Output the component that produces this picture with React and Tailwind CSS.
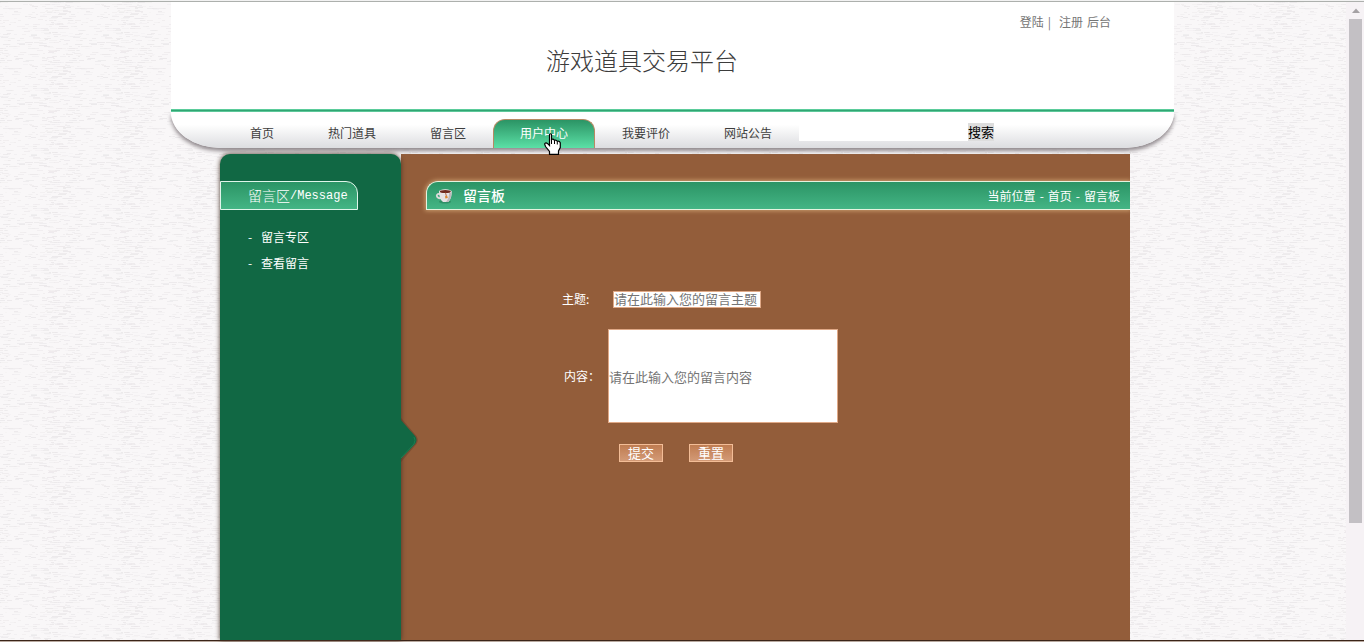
const tabs = ['首页', '热门道具', '留言区', '用户中心', '我要评价', '网站公告']

function PaperTexture() {
  const dashes = []
  let seed = 7
  const next = () => {
    seed = (seed * 16807) % 2147483647
    return seed / 2147483647
  }
  for (let y = 0; y < 60; y += 2) {
    for (let n = 0; n < 9; n++) {
      const x = Math.floor(next() * 72)
      const w = 2 + Math.floor(next() * 7)
      const shift = next() > 0.85 ? 1 : 0
      const opacity = 0.2 + next() * 0.7
      dashes.push({ x, y: y + shift, w, opacity })
    }
  }
  return (
    <svg className="absolute inset-0 h-full w-full" aria-hidden="true">
      <defs>
        <pattern id="paper" width="72" height="60" patternUnits="userSpaceOnUse">
          <rect width="72" height="60" fill="#f9f7f8" />
          {dashes.map((d, i) => (
            <g key={i} fill="#ebe8ea" fillOpacity={d.opacity}>
              <rect x={d.x} y={d.y} width={d.w} height="1" />
              <rect x={d.x - 72} y={d.y} width={d.w} height="1" />
            </g>
          ))}
        </pattern>
      </defs>
      <rect width="100%" height="100%" fill="url(#paper)" />
    </svg>
  )
}

function Cup() {
  return (
    <svg className="h-4 w-[18px] shrink-0" viewBox="0 0 18 16" aria-hidden="true">
      <ellipse cx="10" cy="13.8" rx="6" ry="1.8" fill="#277c57" opacity="0.6" />
      <path d="M5 6C2 5.4 1.2 7.4 2.2 8.9C3.2 10.2 5 10.4 6.5 10" fill="none" stroke="#dedadb" strokeWidth="1.8" />
      <path d="M4 3.5H16.6C17 7.5 15.7 12 13 14H8C5.3 12 4 8 4 3.5Z" fill="#e6e2e4" />
      <path d="M14 5H16.5C16.3 9 15.3 12.4 13 14H11C13.4 11 14.3 8 14 5Z" fill="#bfb9bd" />
      <ellipse cx="10.3" cy="3.4" rx="6.4" ry="2.1" fill="#f3eeee" />
      <ellipse cx="10.3" cy="3.5" rx="5.5" ry="1.5" fill="#6f2a20" />
      <path d="M10.5 4.5L11.3 8" stroke="#a5461f" strokeWidth="0.8" />
      <path d="M10 8.2L12.2 7.8L12.8 10L10.4 10.6Z" fill="#e0862c" />
    </svg>
  )
}

function HandPointer() {
  return (
    <svg className="pointer-events-none absolute left-[50px] top-[13px] h-[22px] w-[17px]" viewBox="0 0 17 22" aria-hidden="true">
      <path
        d="M5.5 1.5Q6.5 0 7.5 1.5V6.5Q9.2 5.4 10.5 7.3Q12.2 6.5 13.3 8.3Q15.3 7.6 16.3 9.8V14.5L14.5 18V21.3H5.5V18.5L1.5 13.5L.6 11Q1.6 9 3.7 10.7L5.5 12.5Z"
        fill="#fff"
        stroke="#000"
        strokeWidth="1.2"
      />
      <path d="M7.5 6V11M10.5 7.3V11M13.3 8.3V11.5" stroke="#000" fill="none" />
    </svg>
  )
}

function Header() {
  return (
    <header>
      <div className="flex h-[107px] flex-col bg-white">
        <div className="flex justify-end pr-[63px] pt-3 text-[12px] leading-4 text-[#757575]">
          <a href="#login">登陆</a>
          <span className="ml-1">|</span>
          <a href="#register" className="ml-2">注册</a>
          <a href="#admin" className="ml-1">后台</a>
        </div>
        <h1 className="pl-[375px] pt-[14px] text-[24px] font-light leading-8 text-[#3c3c3c]">游戏道具交易平台</h1>
      </div>
      <div className="h-[3px] bg-linear-to-b from-[#6fe0b0] via-[#2fa673] to-[#6fe0b0]" />
      <nav className="relative flex h-[36px] items-end rounded-b-[50px_36px] bg-linear-to-b from-white from-35% to-[#dcdde0] pl-[52px] text-[12px] text-[#3d3d3d] shadow-[0_3px_4px_#8e878b]">
        {tabs.map((tab) =>
          tab === '用户中心' ? (
            <a key={tab} href="#tab" className="relative flex h-[29px] items-center rounded-t-xl border border-b-0 border-[#b68a64] bg-linear-to-b from-[#2b9465] to-[#5be0a6] px-[26px] pb-[2px] text-white">
              {tab}
              <HandPointer />
            </a>
          ) : (
            <a key={tab} href="#tab" className="flex h-[29px] items-center px-[27px] pb-[2px]">{tab}</a>
          ),
        )}
        <form className="mb-[7px] flex items-end">
          <input aria-label="搜索" className="h-[18px] w-[169px] bg-white px-1 outline-none" />
          <button type="button" className="h-[18px] bg-[#dddddd] text-[13px] leading-[18px] text-black">搜索</button>
        </form>
      </nav>
    </header>
  )
}

function Sidebar() {
  return (
    <aside className="relative z-10 w-[181px] shrink-0 rounded-t-[10px] bg-[#116844] pt-[27px] shadow-[0_0_5px_#4a3528]">
      <h2 className="flex h-[29px] w-[138px] items-center rounded-tr-xl border border-[#e0f5ea] bg-linear-to-b from-[#2b9465] to-[#44b585] pl-[27px] text-[14px] font-light text-white">
        留言区<span className="font-['Liberation_Mono',monospace] text-[12px]">/Message</span>
      </h2>
      <ul className="pl-7 pt-[14px] text-[12px] leading-[26px] text-white">
        {['留言专区', '查看留言'].map((item) => (
          <li key={item} className="flex gap-2">
            <span className="w-[5px]">-</span>
            <a href="#message">{item}</a>
          </li>
        ))}
      </ul>
      <svg className="absolute left-[180px] top-[262px] h-[48px] w-[22px]" viewBox="0 0 22 48" aria-hidden="true">
        <path d="M1 2L16.5 20Q19 24 16.5 28L1 46Z" fill="#4d3525" opacity="0.35" />
        <path d="M0 3L15 20Q18 24 15 28L0 44Z" fill="#116844" />
        <path d="M1 42L14 28Q16 24 14 21" fill="none" stroke="#1d7d50" />
      </svg>
    </aside>
  )
}

function MessageForm() {
  return (
    <form className="pl-[161px] pt-[80px] text-[12px] text-white">
      <div className="flex items-center">
        <label htmlFor="subject" className="w-[51px]">主题:</label>
        <input id="subject" placeholder="请在此输入您的留言主题" className="h-[17px] w-[148px] border border-[#e0a987] bg-white text-[13px] text-[#333333] outline-none placeholder:text-[#757575]" />
      </div>
      <div className="mt-[21px] flex items-center">
        <label htmlFor="content" className="w-[46px] pl-[2px]">内容：</label>
        <input id="content" placeholder="请在此输入您的留言内容" className="h-[94px] w-[230px] border border-[#e0a987] bg-white text-[13px] text-[#333333] outline-none placeholder:text-[#757575]" />
      </div>
      <div className="mt-[21px] flex gap-[26px] pl-[57px] text-[13px] leading-4">
        <button type="button" className="h-[18px] w-11 border border-[#f3bd97] bg-linear-to-b from-[#bf7c51] to-[#d39a76]">提交</button>
        <button type="reset" className="h-[18px] w-11 border border-[#f3bd97] bg-linear-to-b from-[#bf7c51] to-[#d39a76]">重置</button>
      </div>
    </form>
  )
}

function ScrollTrack() {
  return (
    <div className="flex w-[18px] shrink-0 flex-col items-center bg-[#f6f2f5]" aria-hidden="true">
      <svg className="h-[17px] w-[16px]" viewBox="0 0 16 17">
        <path d="M5 11L9 6.5L13 11Z" fill="#a5a1a4" />
      </svg>
      <div className="ml-px h-[504px] w-[13px] bg-[#c3c0c4]" />
    </div>
  )
}

export default function App() {
  return (
    <div className="flex h-screen flex-col overflow-hidden border-t border-[#f2f2f2] font-['Noto_Sans_CJK_SC',sans-serif]">
      <div className="flex min-h-0 flex-1 border-t border-[#adb0ad]">
        <div className="relative flex min-w-0 flex-1 justify-center pr-px">
          <PaperTexture />
          <div className="relative flex h-full w-full max-w-[1003px] flex-col">
            <Header />
            <div className="ml-[49px] mr-11 mt-[6px] flex min-h-0 flex-1">
              <Sidebar />
              <main className="min-w-0 flex-1 overflow-hidden bg-[#935d3a] pt-[27px]">
                <div className="ml-[25px] flex h-[29px] items-center rounded-tl-xl border border-r-0 border-[#e5f3df] bg-linear-to-b from-[#2b9465] to-[#44b585] pl-2 pr-[10px] text-white shadow-[0_0_4px_1px_#c99b6c]">
                  <Cup />
                  <h2 className="ml-[10px] text-[14px] font-medium">留言板</h2>
                  <p className="ml-auto flex gap-1 text-[12px]">
                    当前位置<span>-</span>
                    <a href="#home">首页</a>
                    <span>-</span>
                    <span>留言板</span>
                  </p>
                </div>
                <MessageForm />
              </main>
            </div>
          </div>
        </div>
        <ScrollTrack />
      </div>
      <div className="h-[2px] shrink-0 border-t border-[#3b2418] bg-[#b9aaa0]" />
    </div>
  )
}
